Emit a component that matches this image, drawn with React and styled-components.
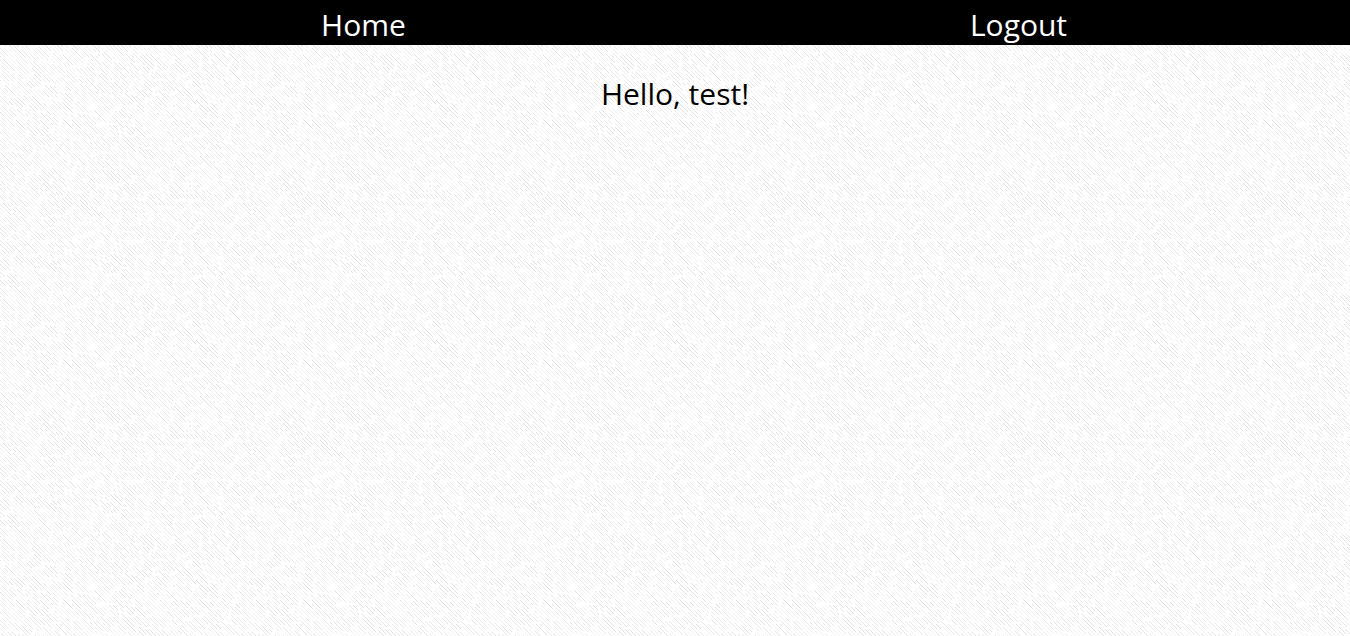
import React from "react";
import styled, { createGlobalStyle } from "styled-components";

/* Woven diagonal texture: one-pixel steps along parallel lines, with gaps. */
const TILE = 240;
const SHADES = ["#e2e2e2", "#e9e9e9", "#f1f1f1"];

function buildTexture() {
  let seed = 4211;
  const random = () => {
    seed = (seed * 16807) % 2147483647;
    return seed / 2147483647;
  };
  const paths = ["", "", ""];
  for (let line = 0; line < TILE; line += 4) {
    let step = Math.floor(random() * 6);
    while (step < TILE) {
      const length = 2 + Math.floor(random() * 12);
      const gap = 2 + Math.floor(random() * 3);
      const shade = Math.floor(random() * 3);
      for (let i = 0; i < length && step + i < TILE; i += 1) {
        const y = step + i;
        paths[shade] += `M${(line + y) % TILE} ${y}h1v1h-1z`;
      }
      step += length + gap;
    }
  }
  const shapes = paths
    .map((d, i) => `<path fill="${SHADES[i]}" d="${d}"/>`)
    .join("");
  const svg = `<svg xmlns="http://www.w3.org/2000/svg" width="${TILE}" height="${TILE}" shape-rendering="crispEdges">${shapes}</svg>`;
  return `url("data:image/svg+xml,${encodeURIComponent(svg)}")`;
}

const texture = buildTexture();

const GlobalStyle = createGlobalStyle`
  body {
    margin: 0;
    min-height: 100vh;
    background: #fff ${texture};
    color: #000;
    font-family: "Segoe UI", "Open Sans", "Noto Sans", sans-serif;
    font-size: 30px;
    line-height: 45px;
  }
`;

const NavBar = styled.nav`
  background: #000;
`;

const NavList = styled.ul`
  display: grid;
  grid-template-columns: 1fr 1fr;
  margin: 0;
  padding: 0 4px 0 36px;
  list-style: none;
  text-align: center;
`;

const NavLink = styled.a`
  display: inline-block;
  padding-top: 4px;
  line-height: 41px;
  color: #fff;
  text-decoration: none;
  vertical-align: top;
`;

const Main = styled.main`
  padding: 26px 16px;
  text-align: center;
`;

const Greeting = styled.h1`
  margin: 0;
  font-size: 30px;
  font-weight: 400;
`;

export default function App() {
  return (
    <>
      <GlobalStyle />
      <NavBar>
        <NavList>
          <li><NavLink href="#home">Home</NavLink></li>
          <li><NavLink href="#logout">Logout</NavLink></li>
        </NavList>
      </NavBar>
      <Main>
        <Greeting>Hello, test!</Greeting>
      </Main>
    </>
  );
}
